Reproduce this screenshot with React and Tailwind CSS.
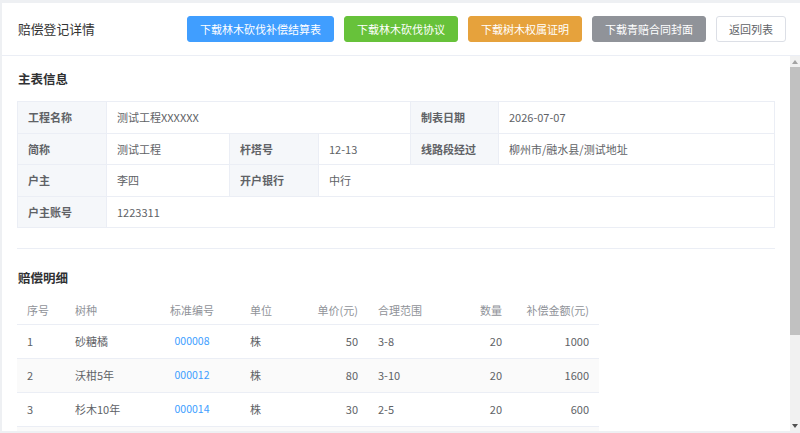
import React from 'react';

const font = { fontFamily: '"Noto Sans CJK SC", "Noto Sans", sans-serif' };

const buttons = [
  { text: '下载林木砍伐补偿结算表', cls: 'bg-[#409eff] border-[#409eff] text-white' },
  { text: '下载林木砍伐协议', cls: 'bg-[#67c23a] border-[#67c23a] text-white' },
  { text: '下载树木权属证明', cls: 'bg-[#e6a23c] border-[#e6a23c] text-white' },
  { text: '下载青赔合同封面', cls: 'bg-[#909399] border-[#909399] text-white' },
  { text: '返回列表', cls: 'bg-white border-[#dcdfe6] text-[#606266]' },
];

const rows = [
  { no: 1, tree: '砂糖橘', code: '000008', unit: '株', price: 50, range: '3-8', qty: 20, amount: 1000 },
  { no: 2, tree: '沃柑5年', code: '000012', unit: '株', price: 80, range: '3-10', qty: 20, amount: 1600 },
  { no: 3, tree: '杉木10年', code: '000014', unit: '株', price: 30, range: '2-5', qty: 20, amount: 600 },
];

const Label = ({ children }) => (
  <td className="bg-[#f5f7fa] border border-[#ebeef5] pl-[10px] font-bold text-[#606266]">{children}</td>
);
const Value = ({ children, span }) => (
  <td colSpan={span} className="border border-[#ebeef5] pl-[10px] text-[#606266]">{children}</td>
);

export default function App() {
  return (
    <div style={font} className="h-[433px] w-[800px] bg-[#eef0f3] pt-[3px] pl-[2px] pb-[2px] overflow-hidden">
      <div className="h-full bg-white flex flex-col">
        {/* Header */}
        <div className="h-[53px] shrink-0 flex items-center justify-between pl-[16px] pr-[14px] border-b border-[#ebeef5]">
          <h1 className="text-[12.8px] text-[#333]">赔偿登记详情</h1>
          <div className="flex items-center gap-[10px]">
            {buttons.map((b) => (
              <button key={b.text} className={`h-[26px] px-[12px] rounded-[3px] border text-[11px] leading-none ${b.cls}`}>
                {b.text}
              </button>
            ))}
          </div>
        </div>

        <div className="flex-1 flex min-h-0">
          {/* Content */}
          <div className="flex-1 overflow-hidden pl-[15px] pr-[15px] pt-[14px]">
            <h2 className="text-[12.5px] font-bold text-[#303133] leading-[18px] pl-[1px]">主表信息</h2>
            <table className="mt-[13px] w-full border-collapse text-[11px] table-fixed">
              <colgroup>
                <col className="w-[89px]" />
                <col className="w-[123px]" />
                <col className="w-[89px]" />
                <col className="w-[92px]" />
                <col className="w-[88px]" />
                <col />
              </colgroup>
              <tbody>
                <tr className="h-[32px]">
                  <Label>工程名称</Label>
                  <Value span={3}>测试工程XXXXXX</Value>
                  <Label>制表日期</Label>
                  <Value>2026-07-07</Value>
                </tr>
                <tr className="h-[31px]">
                  <Label>简称</Label>
                  <Value>测试工程</Value>
                  <Label>杆塔号</Label>
                  <Value>12-13</Value>
                  <Label>线路段经过</Label>
                  <Value>柳州市/融水县/测试地址</Value>
                </tr>
                <tr className="h-[32px]">
                  <Label>户主</Label>
                  <Value>李四</Value>
                  <Label>开户银行</Label>
                  <Value span={3}>中行</Value>
                </tr>
                <tr className="h-[31px]">
                  <Label>户主账号</Label>
                  <Value span={5}>1223311</Value>
                </tr>
              </tbody>
            </table>

            <div className="mt-[20px] border-t border-[#ebeef5]" />

            <h2 className="mt-[20px] text-[12.5px] font-bold text-[#303133] leading-[18px] pl-[1px]">赔偿明细</h2>
            <table className="mt-[9px] w-[582px] border-collapse text-[11px] table-fixed">
              <colgroup>
                <col className="w-[48px]" />
                <col className="w-[79px]" />
                <col className="w-[96px]" />
                <col className="w-[58px]" />
                <col className="w-[70px]" />
                <col className="w-[72px]" />
                <col className="w-[72px]" />
                <col className="w-[87px]" />
              </colgroup>
              <thead>
                <tr className="h-[28px] text-[#909399] border-b border-[#ebeef5]">
                  <th className="px-[10px] text-left font-normal">序号</th>
                  <th className="px-[10px] text-left font-normal">树种</th>
                  <th className="px-[10px] text-center font-normal">标准编号</th>
                  <th className="px-[10px] text-left font-normal">单位</th>
                  <th className="px-[10px] text-right font-normal">单价(元)</th>
                  <th className="px-[10px] text-left font-normal">合理范围</th>
                  <th className="px-[10px] text-right font-normal">数量</th>
                  <th className="px-[10px] text-right font-normal">补偿金额(元)</th>
                </tr>
              </thead>
              <tbody className="text-[#606266]">
                {rows.map((r, i) => (
                  <tr key={r.no} className={`h-[34px] border-b border-[#ebeef5] ${i % 2 === 1 ? 'bg-[#fafafa]' : 'bg-white'}`}>
                    <td className="px-[10px]">{r.no}</td>
                    <td className="px-[10px]">{r.tree}</td>
                    <td className="px-[10px] text-center text-[#409eff] text-[10.5px]">{r.code}</td>
                    <td className="px-[10px]">{r.unit}</td>
                    <td className="px-[10px] text-right">{r.price}</td>
                    <td className="px-[10px]">{r.range}</td>
                    <td className="px-[10px] text-right">{r.qty}</td>
                    <td className="px-[10px] text-right">{r.amount}</td>
                  </tr>
                ))}
                <tr className="h-[34px] bg-[#fafafa]">
                  <td colSpan={8} />
                </tr>
              </tbody>
            </table>
          </div>

          {/* Scrollbar */}
          <div className="w-[10px] shrink-0 bg-[#f1f1f1] flex flex-col items-center">
            <div className="h-[11px] flex items-center justify-center">
              <svg width="6" height="4" viewBox="0 0 6 4"><path d="M3 0L6 4H0z" fill="#a3a3a3" /></svg>
            </div>
            <div className="w-full h-[268px] bg-[#c1c1c1]" />
            <div className="flex-1" />
            <div className="h-[11px] flex items-center justify-center">
              <svg width="6" height="4" viewBox="0 0 6 4"><path d="M0 0H6L3 4z" fill="#505050" /></svg>
            </div>
          </div>
        </div>
      </div>
    </div>
  );
}
